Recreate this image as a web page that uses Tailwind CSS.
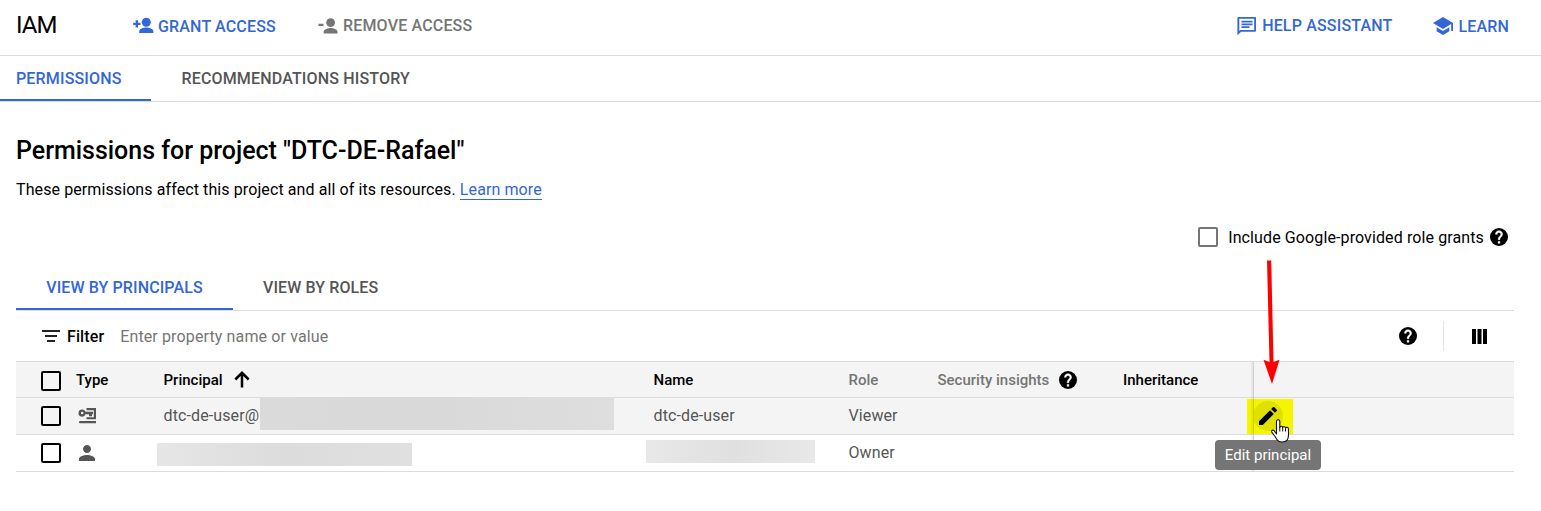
<!DOCTYPE html>
<html lang="en">
<head>
<meta charset="utf-8">
<title>IAM</title>
<script src="https://cdn.jsdelivr.net/npm/@tailwindcss/browser@4"></script>
</head>
<body class="relative h-[511px] w-[1541px] overflow-hidden bg-white font-['Roboto',sans-serif] text-base tracking-[0.11px] text-black whitespace-nowrap">
<svg class="hidden">
  <symbol id="help" viewBox="2 2 20 20"><circle cx="12" cy="12" r="10" fill="#000"/><path fill="#fff" d="M13 19h-2v-2h2v2zm2.070-7.750l-.9.920C13.450 12.900 13 13.500 13 15h-2v-.5c0-1.100.450-2.100 1.170-2.830l1.240-1.260c.370-.360.590-.860.590-1.410 0-1.100-.9-2-2-2s-2 .9-2 2H8c0-2.210 1.790-4 4-4s4 1.790 4 4c0 .880-.360 1.680-.930 2.250z" stroke="#fff" stroke-width=".5"/></symbol>
</svg>

<header class="flex h-14 items-center border-b border-[#dcdcdc] font-medium tracking-[0.17px]">
  <h1 class="w-[117px] pb-1.5 pl-4 text-2xl font-normal tracking-[-0.9px]">IAM</h1>
  <div class="flex w-[185px] items-center pb-1 pl-4 text-[#3367d6]">
    <svg class="h-[17px] w-[21px] shrink-0" viewBox="0 0 21 17" fill="currentColor"><circle cx="13.3" cy="5.2" r="4.500"/><path d="M6.200 16v-1.600c0-2.800 4.600-3.900 7.100-3.900s7.100 1.100 7.100 3.900V16zM2.700 3.300h2.300v2.500h2.500V8H5v2.500H2.700V8H.2V5.800h2.500z"/></svg>
    <span class="ml-[4px] pt-0.5">GRANT ACCESS</span>
  </div>
  <div class="flex items-center pb-1 pl-4 text-[#757575]">
    <svg class="h-[16px] w-[20px] shrink-0" viewBox="0 0 20 16" fill="currentColor"><circle cx="12.600" cy="4.600" r="4.400"/><path d="M5.700 15.500v-1.700c0-2.700 4.500-3.800 6.900-3.800s6.900 1.100 6.900 3.800v1.700zM.5 5.800h5V8H.5z"/></svg>
    <span class="ml-[5px]">REMOVE ACCESS</span>
  </div>
  <div class="ml-auto flex items-center pb-1 text-[#3367d6]">
    <svg class="h-5 w-5" viewBox="0 0 20 20" fill="currentColor"><path fill-rule="evenodd" d="M1.800 1h16c.8 0 1.200.5 1.200 1.200v12.200c0 .8-.5 1.300-1.200 1.300H4.200L.4 19.300V2.200C.4 1.500 1 1 1.800 1zm.5 1.800v12.100l1-1h13.900V2.800z"/><path d="M4.500 4.700h11v1.800h-11zm0 2.800h11v1.800h-11zm0 2.800h8v1.800h-8z"/></svg>
    <span class="ml-[5px]">HELP ASSISTANT</span>
  </div>
  <div class="mr-8 ml-[41px] flex items-center pb-1 text-[#3367d6]">
    <svg class="h-[18px] w-5" viewBox="1 3 22 18" fill="currentColor" preserveAspectRatio="none"><path d="M5 13.180v4L12 21l7-3.820v-4L12 17l-7-3.820zM12 3L1 9l11 6 9-4.910V17h2V9L12 3z"/></svg>
    <span class="ml-[5px] pt-0.5">LEARN</span>
  </div>
</header>

<nav class="flex h-[46px] border-b border-[#dcdcdc] font-medium tracking-[0.16px]">
  <div class="flex w-[151px] items-center border-b-2 border-[#3367d6] pt-0.5 pl-4 text-[#3367d6]">PERMISSIONS</div>
  <div class="flex items-center pl-[30.5px] text-[#555]">RECOMMENDATIONS HISTORY</div>
</nav>

<main class="pr-[27px] pl-4">
  <h2 class="mt-[33px] text-[25px] leading-8 font-medium tracking-[-0.02px]">Permissions for project "DTC-DE-Rafael"</h2>
  <p class="mt-[11px] leading-6 tracking-[0.097px]">These permissions affect this project and all of its resources. <a class="inline-block border-b border-[#3367d6] leading-[18px] text-[#3367d6]">Learn more</a></p>
  <div class="mt-[23px] flex h-6 items-center justify-end pr-1.5">
    <span class="h-5 w-5 rounded-[2px] border-2 border-[#757575]"></span>
    <span class="ml-2.5 pt-0.5">Include Google-provided role grants</span>
    <svg class="ml-1.5 h-[18px] w-[18px]"><use href="#help"/></svg>
  </div>

  <div class="mt-[15px] flex h-[47px] border-b border-[#dcdcdc] font-medium">
    <div class="flex w-[217px] items-center justify-center border-b-2 border-[#3367d6] pt-1 text-[#3367d6]">VIEW BY PRINCIPALS</div>
    <div class="flex items-center pt-0.5 pl-[30px] text-[#555]">VIEW BY ROLES</div>
  </div>

  <div class="flex h-[51px] items-center border-b border-[#dcdcdc] pl-[26px]">
    <svg class="h-3 w-[18px]" viewBox="0 0 18 12"><path fill="#222" d="M0 0h18v2H0zM3 5h12v2H3zM5 10h8v2H5z"/></svg>
    <span class="ml-[7px] pt-0.5 font-medium">Filter</span>
    <span class="ml-4 pt-0.5 tracking-[0.13px] text-[#757575]">Enter property name or value</span>
    <svg class="mr-[26px] ml-auto h-[18px] w-[18px]"><use href="#help"/></svg>
    <span class="h-[30px] w-px bg-[#e4e4e4]"></span>
    <svg class="mr-[27px] ml-[28px] h-[15px] w-[15px]" viewBox="0 0 15 15"><path d="M0 0h4v15H0zM5.500 0h4v15h-4zM11 0h4v15h-4z"/></svg>
  </div>

  <div class="relative">
    <div class="grid h-9 grid-cols-[60px_87px_490px_195px_89px_186px_1fr] items-center border-b border-[#dcdcdc] bg-[#f4f4f4] pt-0.5 text-[15px] font-medium tracking-normal">
      <span class="mt-px ml-[25px] h-5 w-5 rounded-[2px] border-2 border-black"></span>
      <span>Type</span>
      <span class="flex items-center pl-[0.5px]">Principal<svg class="mb-0.5 ml-[11px] h-[17px] w-4" viewBox="0 0 16 17" fill="none" stroke="#000" stroke-width="2.500"><path d="M8 16.500V2M1.300 8.500L8 1.800l6.700 6.700"/></svg></span>
      <span class="pl-[0.5px]">Name</span>
      <span class="pl-[0.5px] text-[#757575]">Role</span>
      <span class="flex items-center pl-[0.5px] text-[#757575]">Security insights<svg class="mb-0.5 ml-2.5 h-[18px] w-[18px]"><use href="#help"/></svg></span>
      <span>Inheritance</span>
    </div>
    <div class="grid h-[37px] grid-cols-[60px_87px_490px_195px_1fr] items-center border-b border-[#dcdcdc] bg-[#f4f4f4] text-[#555]">
      <span class="ml-[25px] h-5 w-5 rounded-[2px] border-2 border-black"></span>
      <svg class="mt-[-1px] ml-0.5 h-4 w-[19px]" viewBox="0 0 19 16"><path fill="#555" fill-rule="evenodd" d="M4.200 1.500a3.600 3.600 0 0 1 3.300 2.200H15v2.600h-1v2h-3v-2H7.500A3.600 3.600 0 1 1 4.200 1.500zm0 2.200a1.300 1.300 0 1 0 0 2.600 1.300 1.300 0 0 0 0-2.600z"/><path fill="#555" d="M8.500 0H18v11.200H8.500V9.200h7.300V2.200H8.500zM1.200 13H18v2.300H1.200z"/></svg>
      <span class="flex h-full items-center"><span class="w-[97px] pl-[0.5px]">dtc-de-user@</span><span class="-mt-px h-[33px] w-[354px] self-start bg-linear-to-r from-[#dadada] via-[#d9d9d9] to-[#dedede]"></span></span>
      <span class="pl-[0.5px]">dtc-de-user</span>
      <span class="pl-[0.5px]">Viewer</span>
    </div>
    <div class="grid h-[37px] grid-cols-[60px_81px_489px_202px_1fr] items-center border-b border-[#dcdcdc] text-[#555]">
      <span class="ml-[25px] h-5 w-5 rounded-[2px] border-2 border-black"></span>
      <svg class="mt-[-1px] ml-[3px] h-4 w-4" viewBox="4 4 16 16" fill="#555"><path d="M12 12c2.210 0 4-1.790 4-4s-1.790-4-4-4-4 1.790-4 4 1.790 4 4 4zm0 2c-2.670 0-8 1.340-8 4v2h16v-2c0-2.660-5.330-4-8-4z"/></svg>
      <span class="mt-0.5 h-[23px] w-[255px] bg-linear-to-r from-[#e6e6e6] via-[#dcdcdc] to-[#e0e0e0]"></span>
      <span class="mb-1 h-[23px] w-[169px] bg-linear-to-r from-[#e8e8e8] via-[#e0e0e0] to-[#e8e8e8]"></span>
      <span class="pb-px pl-[0.5px]">Owner</span>
    </div>
    <span class="absolute top-0 left-[1235px] h-[109px] w-[3px] border-r border-[#cfcfcf] bg-black/5"></span>
  </div>
</main>

<div class="absolute top-[399px] left-[1247px] h-[35px] w-[46px] bg-[#f5f500]">
  <span class="absolute top-[2px] left-[6px] h-[30px] w-[30px] rounded-full bg-[#e1e100]"></span>
  <span class="absolute top-0 left-[4px] h-[35px] w-[3px] border-r border-[#cfcf00] bg-black/5"></span>
  <svg class="absolute top-[8px] left-[12px] h-[18px] w-[18px]" viewBox="3 3 18 18"><path d="M3 17.250V21h3.750L17.810 9.940l-3.750-3.750L3 17.250zM20.710 7.040c.390-.390.390-1.020 0-1.410l-2.340-2.340c-.390-.390-1.020-.390-1.410 0l-1.830 1.830 3.750 3.750 1.830-1.830z"/></svg>
</div>
<div class="absolute top-[440px] left-[1215px] flex h-[30px] w-[106px] items-center justify-center rounded bg-[#757575] text-[15px] tracking-normal text-white">Edit principal</div>
<svg class="absolute top-[418px] left-[1270px] h-[26px] w-5" viewBox="0 0 20 26"><path fill="#fff" stroke="#111" stroke-width="1.100" stroke-linejoin="round" d="M6.500 16V3.500c0-2.400 3.300-2.400 3.300 0V9.500c.2-1.800 2.900-1.600 2.900.2.300-1.500 2.700-1.300 2.800.4.500-1.200 3-1 3 .9v6c0 4-2 7-6.200 7-4.300 0-5.500-2.500-7.300-5.500L1.800 14.200c-.9-1.800 1.200-2.800 2.400-1.500z"/><path fill="none" stroke="#111" d="M9.800 9v4.500M12.700 10v3.500M15.500 10.500v3"/></svg>
<svg class="absolute top-[260px] left-[1260px] h-[125px] w-6" viewBox="0 0 24 125"><path fill="#f00" d="M7 .5h4.200l2.300 101.500 6-2.300L12 124 3.500 99.800l6 2.200z"/></svg>
</body>
</html>
